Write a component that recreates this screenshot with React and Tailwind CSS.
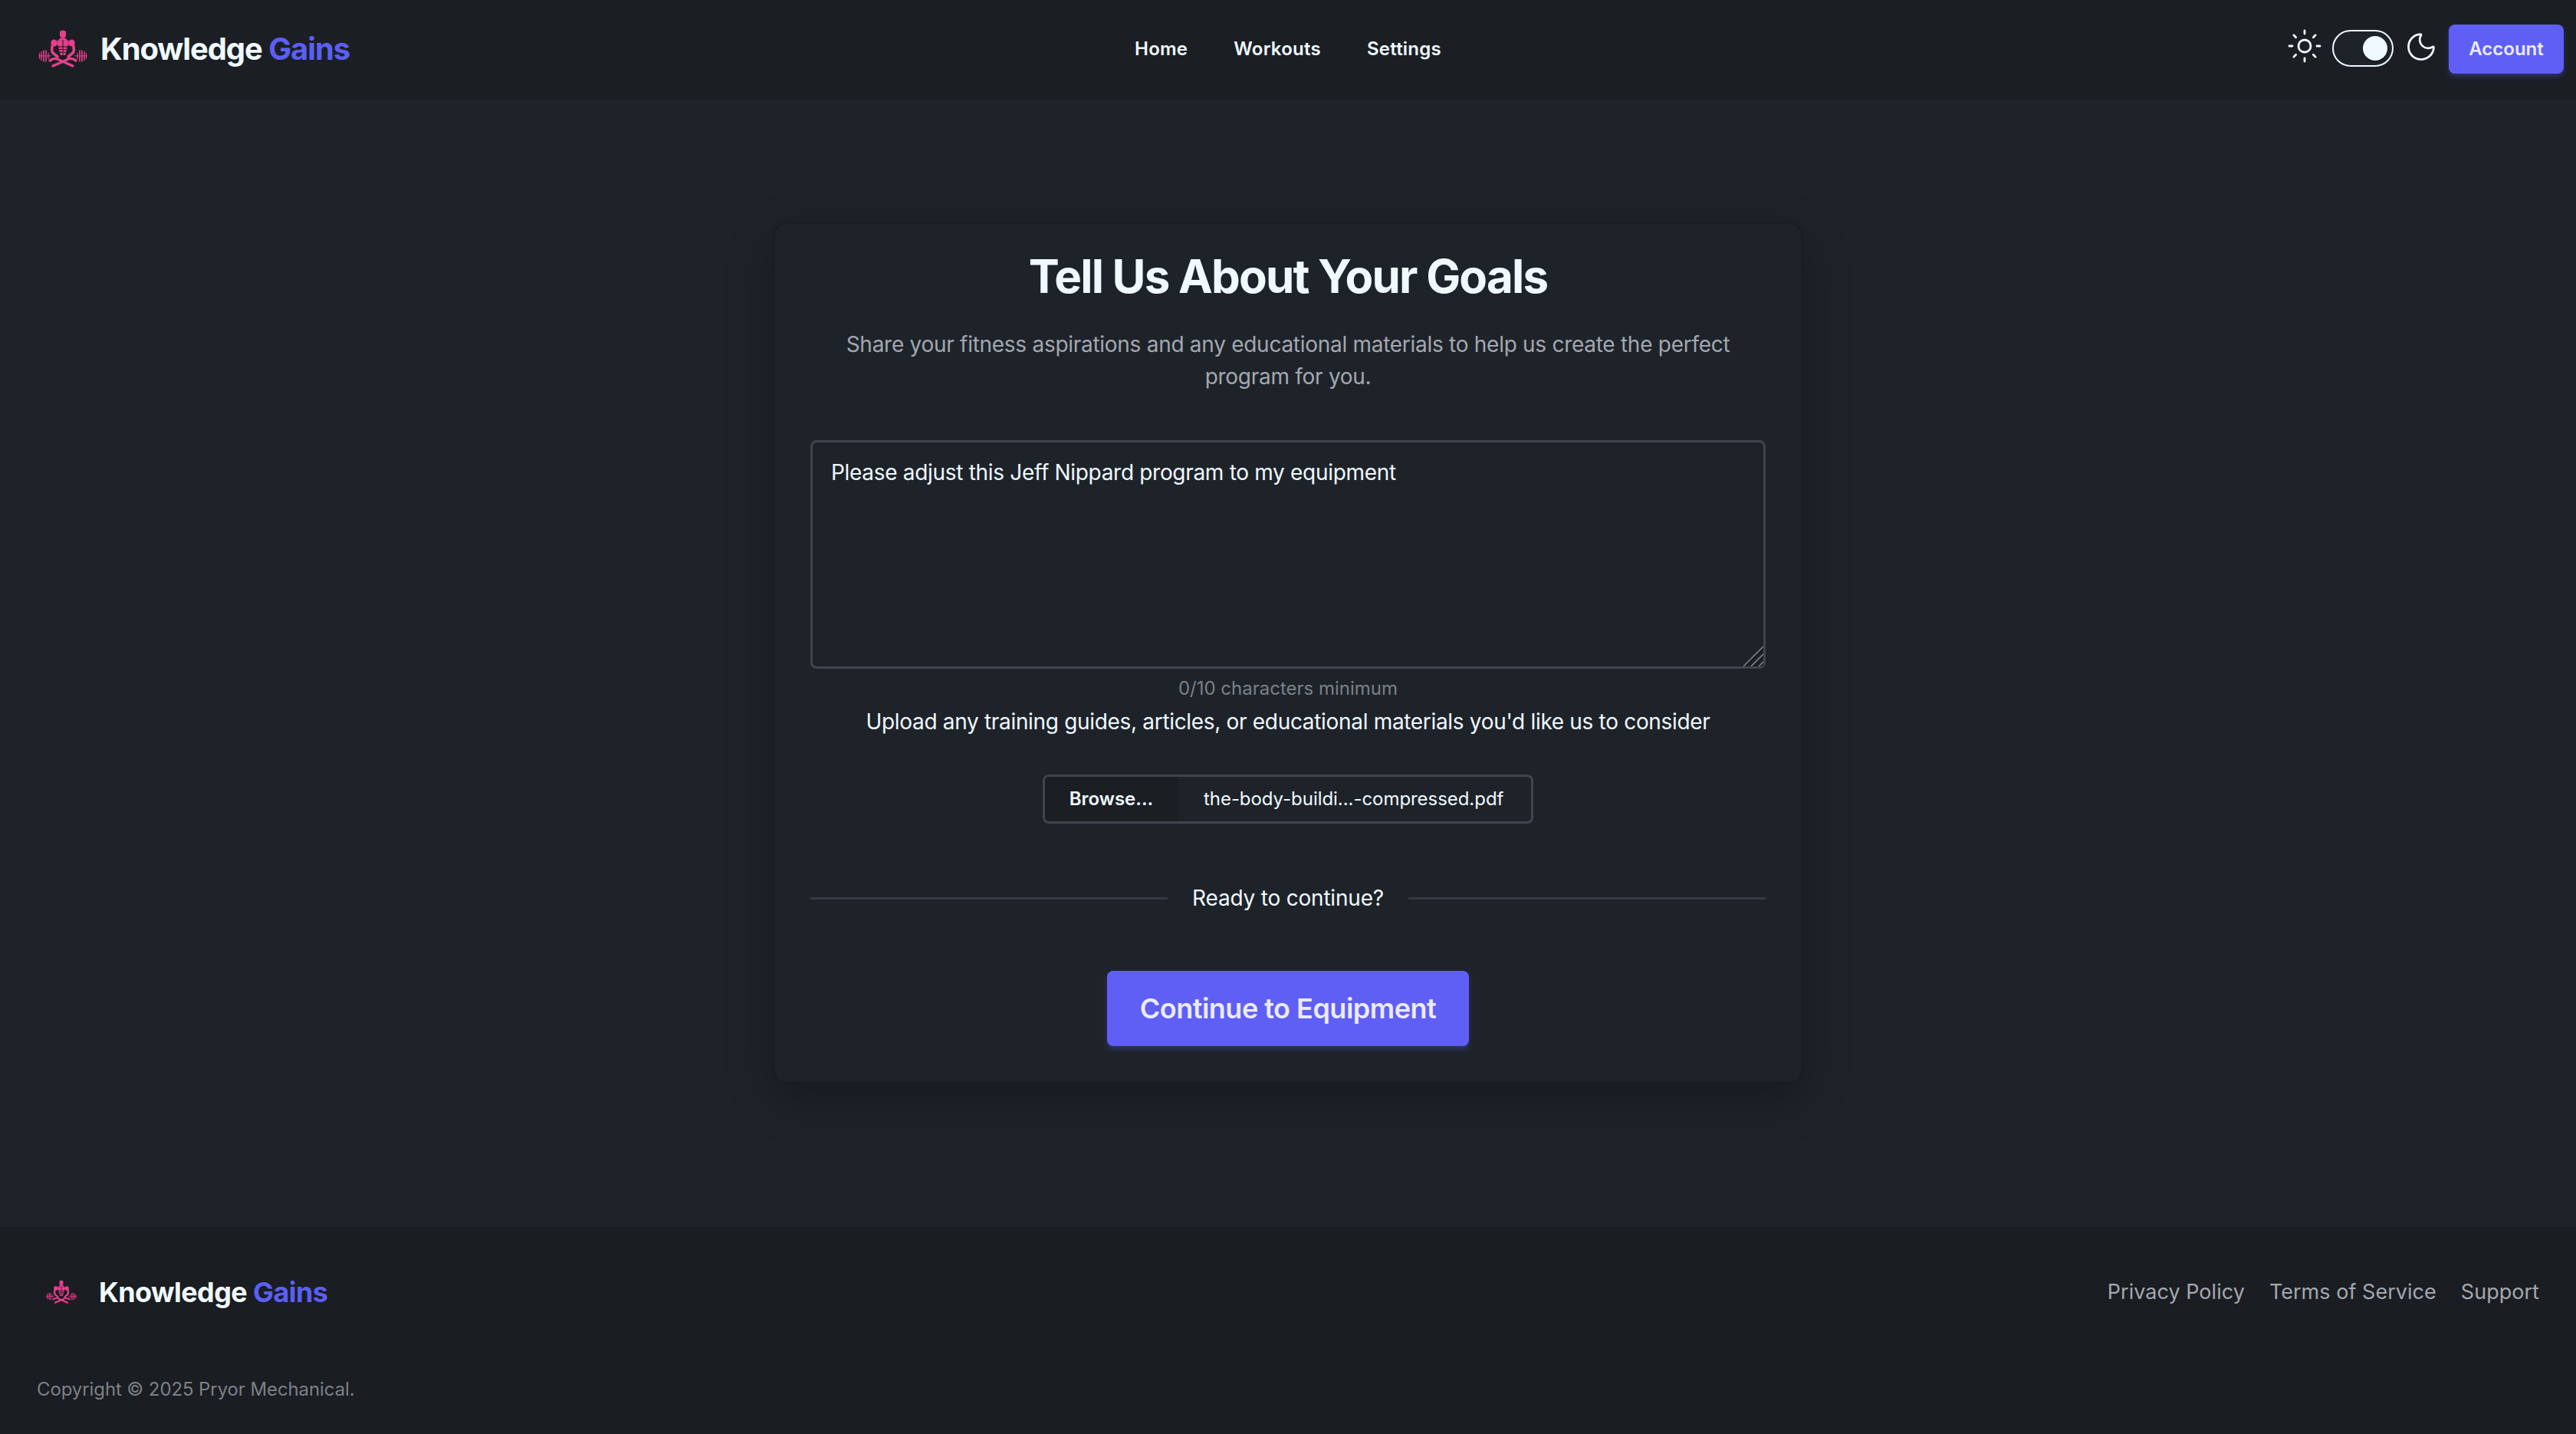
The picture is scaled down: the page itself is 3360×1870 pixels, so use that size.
import { Sun, Moon } from 'lucide-react';

function Logo({ className }) {
  return (
    <svg viewBox="0 0 64 50" className={className} fill="#e83e8c">
      {/* barbell */}
      <rect x="0" y="33.4" width="17" height="1" />
      <rect x="47" y="33.4" width="17" height="1" />
      <rect x="1" y="30" width="1.2" height="8" />
      <rect x="3.4" y="28" width="1.4" height="12" />
      <rect x="6.2" y="26.5" width="1.6" height="15" />
      <rect x="9.2" y="26.5" width="1.6" height="15" />
      <rect x="12.4" y="30" width="1.2" height="8" />
      <rect x="61.8" y="30" width="1.2" height="8" />
      <rect x="59.2" y="28" width="1.4" height="12" />
      <rect x="56.2" y="26.5" width="1.6" height="15" />
      <rect x="53.2" y="26.5" width="1.6" height="15" />
      <rect x="50.4" y="30" width="1.2" height="8" />
      {/* head and traps */}
      <path d="M28 2 Q32 -1 36 2 L36 8 Q34.5 11 32 11 Q29.5 11 28 8 Z" />
      <path d="M24 15 L29 10.5 L35 10.5 L40 15 L32 13.5 Z" />
      {/* shoulders */}
      <ellipse cx="20.5" cy="17" rx="4.2" ry="4.6" />
      <ellipse cx="43.5" cy="17" rx="4.2" ry="4.6" />
      {/* chest */}
      <path d="M24.5 14.5 L31.5 14 L31.5 21 Q27 22.5 24.5 20 Z" />
      <path d="M39.5 14.5 L32.5 14 L32.5 21 Q37 22.5 39.5 20 Z" />
      {/* abs */}
      <path d="M26.5 22.5 L31.5 22.5 L31.5 25 L26.5 25 Z M32.5 22.5 L37.5 22.5 L37.5 25 L32.5 25 Z" />
      <path d="M27 26 L31.5 26 L31.5 28.5 L27.5 28.5 Z M32.5 26 L37 26 L36.5 28.5 L32.5 28.5 Z" />
      <path d="M28 29.5 L31.5 29.5 L31.5 33 L29 33 Z M32.5 29.5 L36 29.5 L35 33 L32.5 33 Z" />
      {/* arms */}
      <path d="M18.5 20 Q16.5 27 19 30 L25 35" stroke="#e83e8c" strokeWidth="3.6" fill="none" strokeLinecap="round" />
      <path d="M45.5 20 Q47.5 27 45 30 L39 35" stroke="#e83e8c" strokeWidth="3.6" fill="none" strokeLinecap="round" />
      {/* crossed legs */}
      <path d="M15 40 Q22 35 28 39.5 L45 47" stroke="#e83e8c" strokeWidth="3.4" fill="none" strokeLinecap="round" />
      <path d="M49 40 Q42 35 36 39.5 L19 47" stroke="#e83e8c" strokeWidth="3.4" fill="none" strokeLinecap="round" />
    </svg>
  );
}

function Brand({ logoClass, textClass, gapClass }) {
  return (
    <div className={`flex items-center ${gapClass}`}>
      <Logo className={logoClass} />
      <span className={`font-bold text-[#f0f9ff] ${textClass}`}>
        Knowledge <span className="text-[#5b5ff5]">Gains</span>
      </span>
    </div>
  );
}

export default function App() {
  return (
    <div className="min-h-[1870px] flex flex-col bg-[#1e232a] font-['Inter',sans-serif] text-[#f0f9ff]">
      {/* Navbar */}
      <header className="h-[130px] bg-[#1b1f24] border-b-2 border-[#1a1d21] grid grid-cols-3 items-center px-[16px]">
        <Brand logoClass="ml-[34px] w-[64px] h-[50px]" textClass="text-[40px] tracking-[-1.1px]" gapClass="gap-[17px]" />

        <nav className="flex justify-center gap-[60px] text-[24px] font-semibold tracking-[0.01em]">
          <a>Home</a>
          <a>Workouts</a>
          <a>Settings</a>
        </nav>

        <div className="flex items-center justify-end">
          <Sun size={48} strokeWidth={1.4} className="mr-[12px] -mt-[8px]" />
          <div className="w-[80px] h-[48px] rounded-full border-2 border-[#f0f9ff] bg-[#1e232a] flex items-center justify-end pr-[6px] -mt-[2px]">
            <div className="w-[32px] h-[32px] rounded-full bg-[#f0f9ff] shadow-[0_2px_2px_rgba(0,0,0,0.4)]" />
          </div>
          <Moon size={44} strokeWidth={1.5} className="ml-[14px] mr-[14px] -mt-[6px]" />
          <button className="w-[150px] h-[64px] rounded-[8px] bg-[#5f5ff6] text-[24px] font-semibold text-[#ebebff] shadow-[0_4px_6px_rgba(91,95,245,0.3)]">
            Account
          </button>
        </div>
      </header>

      {/* Main content */}
      <main className="h-[1470px] flex justify-center pt-[160px]">
        <section className="w-[1342px] h-[1122px] rounded-[16px] border-2 border-[#1a1d21] bg-[#1e232a] shadow-[0_20px_60px_rgba(0,0,0,0.25)] px-[46px] flex flex-col items-center">
          <h1 className="mt-[30px] text-[60px] leading-[76px] font-bold tracking-[-1.8px]">Tell Us About Your Goals</h1>
          <p className="mt-[30px] w-[1190px] text-center text-[28px] leading-[42px] tracking-[-0.28px] text-[#a3a8b0]">
            Share your fitness aspirations and any educational materials to help us create the perfect program for you.
          </p>
          <div className="relative mt-[62px] w-full h-[298px]">
            <textarea
              readOnly
              className="w-full h-full resize-none rounded-[8px] border-[3px] border-[#40454e] bg-[#1e232a] px-[24px] py-[20px] text-[28px] leading-[38px] tracking-[-0.31px] outline-none"
              defaultValue="Please adjust this Jeff Nippard program to my equipment"
            />
            {/* resize handle */}
            <svg viewBox="0 0 26 26" className="absolute right-[3px] bottom-[3px] w-[26px] h-[26px]" fill="none">
              <path d="M0 26 L26 0 M10 26 L26 10 M20 26 L26 20" stroke="#8a8d92" strokeWidth="1.4" />
              <path d="M3 26 L26 3 M13 26 L26 13 M23 26 L26 23" stroke="#15181c" strokeWidth="1.4" />
            </svg>
          </div>
          <div className="mt-[8px] text-[24px] leading-[36px] text-[#7c8188]">0/10 characters minimum</div>
          <div className="mt-[4px] text-[28px] leading-[42px] tracking-[-0.32px]">Upload any training guides, articles, or educational materials you'd like us to consider</div>

          <div className="mt-[48px] w-[640px] h-[64px] rounded-[8px] border-[3px] border-[#40454e] flex items-center overflow-hidden text-[24px]">
            <div className="w-[173px] h-full bg-[#1b1f24] font-semibold flex items-center justify-center">Browse...</div>
            <div className="pl-[34px] tracking-[-0.05px]">the-body-buildi...-compressed.pdf</div>
          </div>

          <div className="mt-[76px] w-full flex items-center gap-[32px] text-[28px] leading-[42px] tracking-[-0.2px]">
            <div className="flex-1 h-[3px] bg-[#363b43]" />
            <span>Ready to continue?</span>
            <div className="flex-1 h-[3px] bg-[#363b43]" />
          </div>

          <button className="mt-[74px] w-[472px] h-[98px] rounded-[8px] bg-[#5f5ff6] text-[36px] font-semibold tracking-[-0.5px] text-[#ebebff] shadow-[0_4px_6px_rgba(91,95,245,0.3)]">
            Continue to Equipment
          </button>
        </section>
      </main>

      {/* Footer */}
      <footer className="h-[270px] bg-[#1a1d21] px-[48px] flex flex-col">
        <div className="mt-[58px] flex items-center justify-between">
          <Brand logoClass="ml-[12px] w-[40px] h-[32px]" textClass="text-[36px] tracking-[-0.6px]" gapClass="gap-[29px]" />
          <div className="flex gap-[32px] text-[27px] tracking-[0.03px] text-[#a3a8b0]">
            <a>Privacy Policy</a>
            <a>Terms of Service</a>
            <a>Support</a>
          </div>
        </div>
        <div className="mt-[82px] text-[24px] tracking-[-0.1px] text-[#7c8188]">Copyright © 2025 Pryor Mechanical.</div>
      </footer>
    </div>
  );
}
